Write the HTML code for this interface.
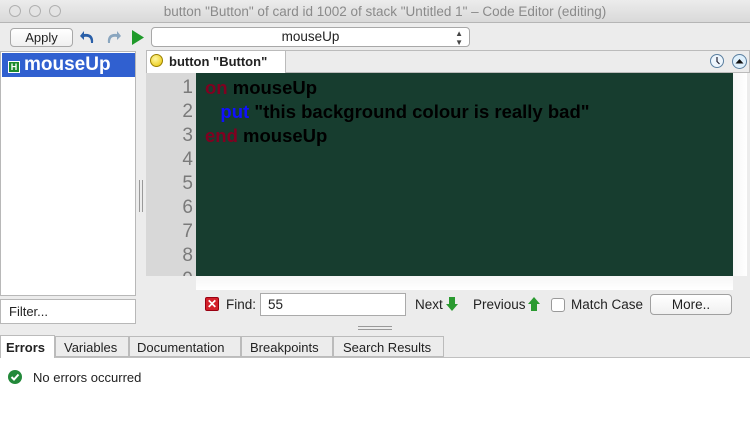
<!DOCTYPE html>
<html><head><meta charset="utf-8"><style>
*{margin:0;padding:0;box-sizing:border-box}
body{width:750px;height:423px;overflow:hidden;background:#ececec;font-family:"Liberation Sans",sans-serif;font-size:13px;color:#222;position:relative}
.a{position:absolute}
</style></head><body>
<div class="a" style="left:0;top:0;width:750px;height:23px;background:linear-gradient(#ececec,#d9d9d9);border-bottom:1px solid #b5b5b5"></div>
<div class="a" style="left:9px;top:5px;width:12px;height:12px;border-radius:50%;border:1px solid #b0b0b0;background:#e4e4e4"></div>
<div class="a" style="left:29px;top:5px;width:12px;height:12px;border-radius:50%;border:1px solid #b0b0b0;background:#e4e4e4"></div>
<div class="a" style="left:49px;top:5px;width:12px;height:12px;border-radius:50%;border:1px solid #b0b0b0;background:#e4e4e4"></div>
<div class="a" style="left:0;top:4px;width:750px;text-align:center;padding-left:20px;color:#8a8a8a;font-size:13.5px">button "Button" of card id 1002 of stack "Untitled 1" – Code Editor (editing)</div>
<div class="a" style="left:10px;top:28px;width:63px;height:19px;border:1px solid #a8a8a8;border-radius:4px;background:linear-gradient(#fff,#f0f0f0);text-align:center;line-height:17px">Apply</div>
<svg class="a" style="left:79px;top:28px" width="18" height="18"><path d="M14 15 C15 8 11 5 5 6 L5 3 L1 8 L5 12 L5 9 C10 8 12 10 12 15Z" fill="#2a5fa8"/></svg>
<svg class="a" style="left:104px;top:28px" width="18" height="18"><path d="M4 15 C3 8 7 5 13 6 L13 3 L17 8 L13 12 L13 9 C8 8 6 10 6 15Z" fill="#8aa6bf"/></svg>
<svg class="a" style="left:131px;top:29px" width="14" height="17"><path d="M1 1 L13 8.5 L1 16Z" fill="#1f9a2a"/></svg>
<div class="a" style="left:151px;top:27px;width:319px;height:20px;border:1px solid #a8a8a8;border-radius:4px;background:#fff;text-align:center;line-height:18px;font-size:13.5px">mouseUp<span style="position:absolute;right:6px;top:0;font-size:8px;line-height:9px;top:1px;color:#444">▲<br>▼</span></div>
<div class="a" style="left:0;top:51px;width:136px;height:245px;background:#fff;border:1px solid #b8b8b8"></div>
<div class="a" style="left:2px;top:53px;width:133px;height:24px;background:#3060d0"></div>
<div class="a" style="left:8px;top:61px;width:12px;height:12px;background:#1e8a2e;border:1px solid #fff;color:#fff;font-size:9px;font-weight:bold;text-align:center;line-height:10px">H</div>
<div class="a" style="left:24px;top:54px;color:#fff;font-size:19px;font-weight:bold">mouseUp</div>
<div class="a" style="left:0;top:299px;width:136px;height:25px;background:#fff;border:1px solid #b8b8b8;padding:4px 8px;font-size:13px">Filter...</div>
<div class="a" style="left:139px;top:180px;width:4px;height:32px;border-left:1px solid #999;border-right:1px solid #999"></div>
<div class="a" style="left:146px;top:50px;width:604px;height:23px;border:1px solid #bbb;background:#ececec"></div>
<div class="a" style="left:146px;top:50px;width:140px;height:23px;background:#fff;border:1px solid #bbb;border-bottom:none"></div>
<div class="a" style="left:150px;top:54px;width:13px;height:13px;border-radius:50%;background:radial-gradient(circle at 40% 35%,#fff7a0,#e8c400);border:1px solid #9a8000"></div>
<div class="a" style="left:169px;top:54px;font-weight:bold;font-size:13px">button "Button"</div>
<div class="a" style="left:710px;top:54px;width:14px;height:14px;border-radius:50%;border:1px solid #5a7fa0;background:#eef6fd"></div>
<svg class="a" style="left:710px;top:54px" width="14" height="14"><path d="M7 3 V7.5 L9.5 10" stroke="#223" stroke-width="1.2" fill="none"/></svg>
<div class="a" style="left:732px;top:54px;width:15px;height:15px;border-radius:50%;border:1px solid #5a7fa0;background:#dff0fc"></div>
<svg class="a" style="left:732px;top:54px" width="15" height="15"><path d="M3.5 9.5 L7.5 5 L11.5 9.5Z" fill="#111"/></svg>
<div class="a" style="left:146px;top:73px;width:50px;height:203px;background:#d8d8d8;overflow:hidden;color:#7a7a7a;font-size:19px;line-height:24px;text-align:right;padding-right:3px;padding-top:3px">1<br>2<br>3<br>4<br>5<br>6<br>7<br>8<br>9</div>
<div class="a" style="left:196px;top:73px;width:537px;height:203px;background:#173d2f;font-size:18.5px;font-weight:bold;line-height:24px;padding-top:3px;padding-left:9px;color:#000;white-space:pre"><span style="color:#800020">on</span> mouseUp
   <span style="color:#1010ff">put</span> "this background colour is really bad"
<span style="color:#800020">end</span> mouseUp</div>
<div class="a" style="left:733px;top:73px;width:14px;height:203px;background:linear-gradient(90deg,#f6f6f6,#fff)"></div>
<div class="a" style="left:196px;top:276px;width:537px;height:14px;background:linear-gradient(#f6f6f6,#fff)"></div>
<div class="a" style="left:205px;top:297px;width:14px;height:14px;background:#d3202a;border:1px solid #901;border-radius:2px;color:#fff;font-size:12px;font-weight:bold;text-align:center;line-height:12px">✕</div>
<div class="a" style="left:226px;top:297px;font-size:13.5px">Find:</div>
<div class="a" style="left:260px;top:293px;width:146px;height:23px;background:#fff;border:1px solid #aaa;padding:3px 7px;font-size:13.5px">55</div>
<div class="a" style="left:415px;top:297px;font-size:13.5px">Next</div>
<svg class="a" style="left:445px;top:296px" width="14" height="16"><path d="M4 1 H10 V8 H13 L7 15 L1 8 H4Z" fill="#2a9a30"/></svg>
<div class="a" style="left:473px;top:297px;font-size:13.5px">Previous</div>
<svg class="a" style="left:527px;top:296px" width="14" height="16"><path d="M4 15 H10 V8 H13 L7 1 L1 8 H4Z" fill="#2a9a30"/></svg>
<div class="a" style="left:551px;top:298px;width:14px;height:14px;border:1px solid #999;border-radius:3px;background:#fff"></div>
<div class="a" style="left:571px;top:297px;font-size:13.5px">Match Case</div>
<div class="a" style="left:650px;top:294px;width:82px;height:21px;border:1px solid #a0a0a0;border-radius:4px;background:linear-gradient(#fff,#f0f0f0);text-align:center;line-height:19px;font-size:13.5px">More..</div>
<div class="a" style="left:358px;top:326px;width:34px;height:4px;border-top:1px solid #999;border-bottom:1px solid #999"></div>
<div class="a" style="left:0;top:357px;width:750px;height:66px;background:#fff;border-top:1px solid #c0c0c0"></div>
<div class="a" style="left:0;top:335px;width:55px;height:23px;background:#fff;border:1px solid #bbb;border-bottom:none;font-weight:bold;padding:4px 5px">Errors</div>
<div class="a" style="left:55px;top:336px;width:74px;height:21px;border:1px solid #bbb;padding:3px 8px">Variables</div>
<div class="a" style="left:129px;top:336px;width:112px;height:21px;border:1px solid #bbb;padding:3px 7px">Documentation</div>
<div class="a" style="left:241px;top:336px;width:92px;height:21px;border:1px solid #bbb;padding:3px 8px">Breakpoints</div>
<div class="a" style="left:333px;top:336px;width:111px;height:21px;border:1px solid #bbb;padding:3px 9px">Search Results</div>
<div class="a" style="left:8px;top:370px;width:14px;height:14px;border-radius:50%;background:#23893a"></div>
<svg class="a" style="left:8px;top:370px" width="14" height="14"><path d="M3.5 7 L6 9.5 L10.5 4.5" stroke="#fff" stroke-width="2" fill="none"/></svg>
<div class="a" style="left:33px;top:370px;font-size:13px">No errors occurred</div>
</body></html>
